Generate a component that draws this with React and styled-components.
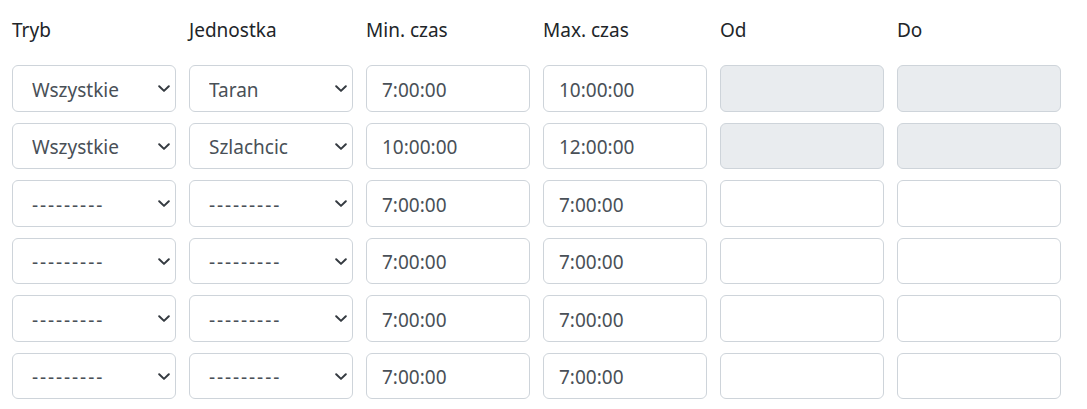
import React from 'react'
import styled, { createGlobalStyle } from 'styled-components'

const GlobalStyle = createGlobalStyle`
    body {
        margin: 0;
        background: #fff;
        font-family: "Noto Sans", "Open Sans", sans-serif;
        color: #212529;
    }
`

const rows = [
    { tryb: 'Wszystkie', unit: 'Taran', min: '7:00:00', max: '10:00:00', locked: true },
    { tryb: 'Wszystkie', unit: 'Szlachcic', min: '10:00:00', max: '12:00:00', locked: true },
    { tryb: '---------', unit: '---------', min: '7:00:00', max: '7:00:00' },
    { tryb: '---------', unit: '---------', min: '7:00:00', max: '7:00:00' },
    { tryb: '---------', unit: '---------', min: '7:00:00', max: '7:00:00' },
    { tryb: '---------', unit: '---------', min: '7:00:00', max: '7:00:00' },
]

const headers = ['Tryb', 'Jednostka', 'Min. czas', 'Max. czas', 'Od', 'Do']

const Chevron = () => (
    <ChevronIcon viewBox="0 0 12 8" width="12" height="8">
        <path d="M1.2 1.5l4.8 4.6 4.8-4.6" fill="none" stroke="#343a40" strokeWidth="2" strokeLinecap="round" strokeLinejoin="round" />
    </ChevronIcon>
)

const Select = ({ value }) => (
    <SelectWrap>
        <SelectBox defaultValue={value} $blank={value.startsWith('-')}>
            <option>{value}</option>
        </SelectBox>
        <Chevron />
    </SelectWrap>
)

const App = () => {
    return (
        <Page>
            <GlobalStyle />
            <Grid>
                {headers.map((h) => (
                    <HeadCell key={h}>{h}</HeadCell>
                ))}
                {rows.map((r, i) => (
                    <React.Fragment key={i}>
                        <Select value={r.tryb} />
                        <Select value={r.unit} />
                        <Input defaultValue={r.min} />
                        <Input defaultValue={r.max} />
                        <Input disabled={r.locked} />
                        <Input disabled={r.locked} />
                    </React.Fragment>
                ))}
            </Grid>
        </Page>
    )
}

export default App

const Page = styled.div`
    padding: 0 12px;
`

const Grid = styled.div`
    display: grid;
    grid-template-columns: repeat(6, 164px);
    column-gap: 13px;
    row-gap: 11px;
    grid-auto-rows: 46.5px;
    grid-template-rows: 54px;
`

const HeadCell = styled.div`
    font-size: 19px;
    line-height: 1;
    padding-top: 21px;
    color: #212529;
`

const SelectWrap = styled.div`
    position: relative;
    height: 100%;
`

const SelectBox = styled.select`
    appearance: none;
    -webkit-appearance: none;
    width: 100%;
    height: 100%;
    box-sizing: border-box;
    border: 1px solid #ced4da;
    border-radius: 6px;
    background: #fff;
    padding: 3px 36px 0 19px;
    font-family: "Noto Sans", "Open Sans", sans-serif;
    font-size: 19px;
    letter-spacing: ${(p) => (p.$blank ? '1.9px' : 'normal')};
    color: #495057;
    outline: none;
`

const ChevronIcon = styled.svg`
    position: absolute;
    right: 6px;
    top: 50%;
    transform: translateY(-40%);
    pointer-events: none;
`

const Input = styled.input`
    width: 100%;
    height: 100%;
    box-sizing: border-box;
    border: 1px solid #ced4da;
    border-radius: 6px;
    background: ${(p) => (p.disabled ? '#e9ecef' : '#fff')};
    padding: 3px 15px 0;
    font-family: "Noto Sans", "Open Sans", sans-serif;
    font-size: 19px;
    color: #495057;
    outline: none;
`
